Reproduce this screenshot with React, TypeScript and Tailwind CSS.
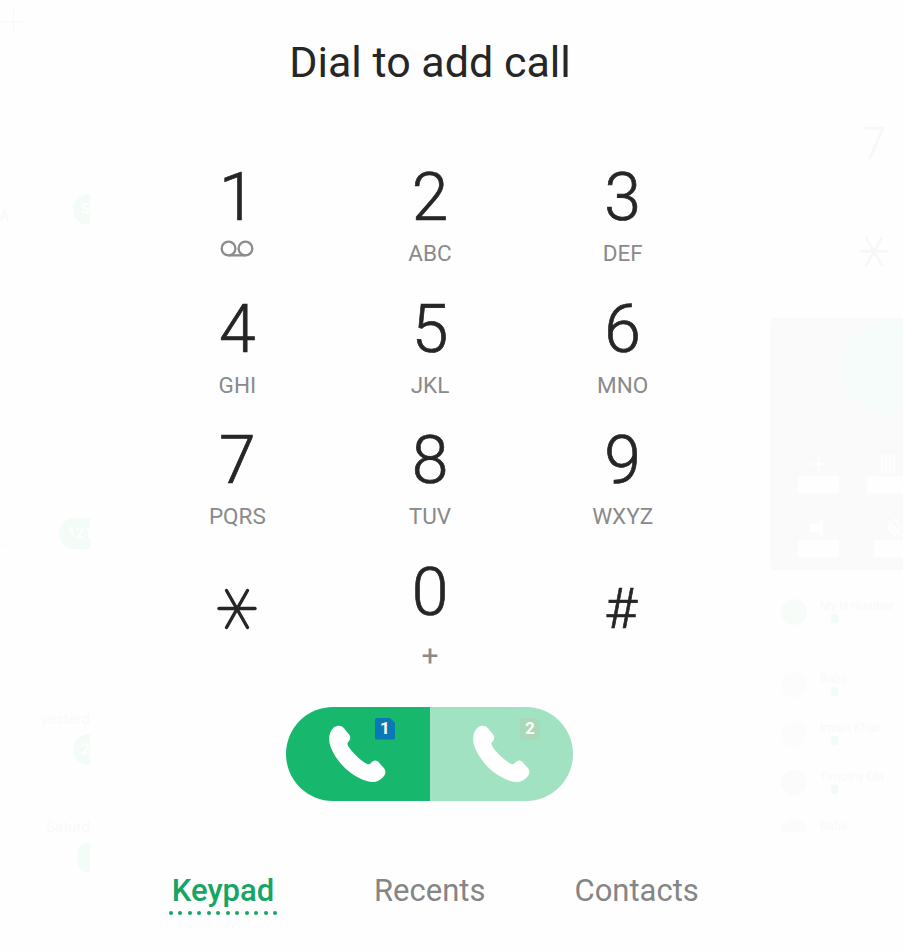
import React from 'react';
import { MicOff, Pause, Plus } from 'lucide-react';

const keys = [
    { digit: '1', sub: 'voicemail' },
    { digit: '2', sub: 'ABC' },
    { digit: '3', sub: 'DEF' },
    { digit: '4', sub: 'GHI' },
    { digit: '5', sub: 'JKL' },
    { digit: '6', sub: 'MNO' },
    { digit: '7', sub: 'PQRS' },
    { digit: '8', sub: 'TUV' },
    { digit: '9', sub: 'WXYZ' },
];

// faded call log of the screen behind the dialer
const ghostLeft = [
    { id: 1, gap: 'mt-[137px]', label: '', badge: '5', pill: 'w-[17px]', side: 'A' },
    { id: 2, gap: 'mt-[271px]', label: '', badge: '121', pill: 'w-[31px]', side: '...' },
    { id: 3, gap: 'mt-[159px]', label: 'yesterd', badge: '2', pill: 'w-[17px]', side: '' },
    { id: 4, gap: 'mt-[51px]', label: 'Saturd', badge: '', pill: 'w-[13px]', side: '' },
];

const ghostContacts = [
    { label: 'My N Number', tint: 'bg-[#f7fcf9]', row: 'h-[73px]' },
    { label: 'Baba', tint: 'bg-[#fcfcfc]', row: 'h-[49px]' },
    { label: 'Imran Khan', tint: 'bg-[#fcfcfc]', row: 'h-[49px]' },
    { label: 'Timothy Ola', tint: 'bg-[#fbfbfb]', row: 'h-[49px]' },
];

const VoicemailIcon: React.FC = () => (
    <svg width="38" height="19" viewBox="0 0 36 18" fill="none" stroke="#8c8c8c" strokeWidth="2.2">
        <circle cx="10" cy="9" r="6.5" />
        <circle cx="26" cy="9" r="6.5" />
        <path d="M10 15.5H26" />
    </svg>
);

const StarIcon: React.FC<{ size?: number; color?: string }> = ({ size = 40, color = '#262626' }) => (
    <svg width={size} height={size * 1.05} viewBox="0 0 40 42" fill="none" stroke={color} strokeWidth="3.4" strokeLinecap="round">
        <path d="M2 20.5H38" />
        <path d="M9.5 2.5L30.5 39.5" />
        <path d="M30.5 2.5L9.5 39.5" />
    </svg>
);

const PhoneIcon: React.FC = () => (
    <svg width="58" height="60" viewBox="172 104 176 178" fill="#ffffff">
        <path d="M190 112C200 104 212 106 220 114L236 134C242 142 240 150 234 156C230 160 230 164 234 170C248 190 264 206 288 222C294 226 298 224 302 220C308 212 316 210 324 216L340 234C348 242 348 252 342 260C330 276 312 282 292 276C244 262 200 222 180 172C172 150 174 126 190 112Z" />
    </svg>
);

const SimBadge: React.FC<{ n: string; className: string }> = ({ n, className }) => (
    <div className={`absolute top-[11px] flex h-[22px] w-[20px] items-center justify-center rounded-[2px] text-[17px] font-bold leading-none text-white ${className} [clip-path:polygon(0_0,72%_0,100%_24%,100%_100%,0_100%)]`}>
        {n}
    </div>
);

const GhostLeft: React.FC = () => (
    <div className="flex w-[90px] flex-col">
        <svg className="mt-[8px]" width="26" height="27" viewBox="0 0 26 27" stroke="#f8f8f8">
            <path d="M13.5 0V27M0 13.5H26" />
        </svg>
        {ghostLeft.map(item => (
            <div key={item.id} className={`flex flex-col ${item.gap}`}>
                {item.label ? (
                    <div className="h-[26px] whitespace-nowrap text-right text-[15px] leading-[22px] text-[#f9f9f9]">{item.label}</div>
                ) : (
                    <div className="mb-[9px] ml-auto h-[13px] w-[24px] rounded-full border border-dotted border-[#fbfbfb]" />
                )}
                <div className="flex items-end justify-between">
                    <span className="text-[14px] leading-[18px] text-[#f8f8f8]">{item.side}</span>
                    <div className={`flex h-[31px] items-center overflow-hidden rounded-l-full bg-[#f4fcf8] pl-[8px] text-[15px] font-bold text-white ${item.pill}`}>
                        {item.badge}
                    </div>
                </div>
            </div>
        ))}
    </div>
);

const GhostCell: React.FC<{ icon: React.ReactNode }> = ({ icon }) => (
    <div className="flex w-[41px] shrink-0 flex-col items-center">
        <div className="flex h-[24px] items-center text-[#fefefe]">{icon}</div>
        <div className="h-[17px] w-[41px] rounded-[2px] bg-[#fefefe]" />
    </div>
);

const GhostRight: React.FC = () => (
    <div className="flex w-[133px] flex-col pt-[122px]">
        <div className="h-[44px] pl-[92px] text-[44px] font-light leading-none text-[#f7f7f7]">7</div>
        <div className="mt-[70px] h-[32px] pl-[89px]">
            <StarIcon size={30} color="#f7f7f7" />
        </div>

        <div className="relative mt-[50px] flex h-[252px] flex-col gap-[23px] overflow-hidden rounded-l-[4px] bg-[#fafafa] pl-[28px] pt-[134px]">
            <div className="absolute left-[72px] top-[2px] h-[94px] w-[94px] rounded-full bg-[#f6fcf9]" />
            <div className="flex gap-[28px]">
                <GhostCell icon={<Plus size={24} strokeWidth={2} />} />
                <GhostCell icon={<Pause size={22} strokeWidth={2} />} />
            </div>
            <div className="flex gap-[35px]">
                <GhostCell icon={<svg width="20" height="18" viewBox="0 0 20 18" fill="currentColor"><path d="M1 5H6L14 0V18L6 13H1Z" /></svg>} />
                <GhostCell icon={<MicOff size={20} strokeWidth={2.5} />} />
            </div>
        </div>

        <div className="mt-[29px] flex flex-col pl-[11px]">
            {ghostContacts.map(row => (
                <div key={row.label} className={`flex gap-[13px] ${row.row}`}>
                    <div className={`h-[26px] w-[26px] rounded-full ${row.tint}`} />
                    <div className="flex flex-col">
                        <span className="whitespace-nowrap text-[12px] leading-[14px] text-[#f9f9f9]">{row.label}</span>
                        <span className="ml-[11px] mt-[1px] h-[9px] w-[7px] rounded-[1px] bg-[#f2fbf8]" />
                    </div>
                </div>
            ))}
            <div className="flex gap-[13px]">
                <div className="h-[13px] w-[26px] rounded-t-full bg-[#fbfbfb]" />
                <span className="text-[12px] leading-[14px] text-[#f9f9f9]">Baba</span>
            </div>
        </div>
    </div>
);

const App: React.FC = () => {
    return (
        <div className="relative h-[952px] w-[903px] overflow-hidden bg-[#fefefe] font-['Roboto',sans-serif]">
            <div className="pointer-events-none absolute inset-0 flex justify-between overflow-hidden">
                <GhostLeft />
                <GhostRight />
            </div>
            <div className="relative flex w-[860px] flex-col items-center">
                <h1 className="mt-[36px] h-[52px] text-[43px] font-normal leading-[52px] text-[#262626]">Dial to add call</h1>

                <div className="mt-[74px] grid w-[578px] grid-cols-3">
                    {keys.map(key => (
                        <div key={key.digit} className="flex h-[131.5px] flex-col items-center">
                            <span className="h-[72px] text-[66px] font-light leading-[72px] text-[#262626] [-webkit-text-stroke:0.7px_#262626]">{key.digit}</span>
                            {key.sub === 'voicemail' ? (
                                <span className="mt-[5px]"><VoicemailIcon /></span>
                            ) : (
                                <span className="mt-[6px] text-[22.5px] leading-[26px] text-[#8a8a8a]">{key.sub}</span>
                            )}
                        </div>
                    ))}
                    <div className="flex h-[118px] flex-col items-center pt-[31px]">
                        <StarIcon />
                    </div>
                    <div className="flex h-[118px] flex-col items-center">
                        <span className="h-[72px] text-[66px] font-light leading-[72px] text-[#262626] [-webkit-text-stroke:0.7px_#262626]">0</span>
                        <span className="mt-[9px] text-[30px] leading-[36px] text-[#8a8a8a]">+</span>
                    </div>
                    <div className="flex h-[118px] flex-col items-center pr-[4px] pt-[19px]">
                        <span className="text-[56px] font-light leading-[66px] text-[#262626] [-webkit-text-stroke:0.7px_#262626]">#</span>
                    </div>
                </div>

                <div className="mr-[1px] mt-[32px] flex h-[94px] w-[287px]">
                    <button className="relative flex w-[144px] items-center justify-center rounded-l-full bg-[#17b76d] pr-[3px] pt-[1px]">
                        <PhoneIcon />
                        <SimBadge n="1" className="left-[89px] bg-[#0a78b4]" />
                    </button>
                    <button className="relative flex w-[143px] items-center justify-center rounded-r-full bg-[#a0e2c2] pr-[1px] pt-[1px]">
                        <PhoneIcon />
                        <SimBadge n="2" className="left-[90px] bg-[#aad8b8]" />
                    </button>
                </div>

                <div className="mt-[72px] flex w-[860px] items-start">
                    <div className="ml-[169px] flex w-[108px] flex-col items-center">
                        <span className="text-[31px] font-medium leading-[36px] text-[#17a565]">Keypad</span>
                        <div className="mt-[2px] flex w-full justify-between">
                            {[...Array(12)].map((_, i) => (
                                <span key={i} className="h-[4px] w-[4px] rounded-full bg-[#17a565]" />
                            ))}
                        </div>
                    </div>
                    <span className="ml-[97px] text-[31px] leading-[36px] text-[#858585]">Recents</span>
                    <span className="ml-[89px] text-[31px] leading-[36px] text-[#858585]">Contacts</span>
                </div>
            </div>
        </div>
    );
};

export default App;
